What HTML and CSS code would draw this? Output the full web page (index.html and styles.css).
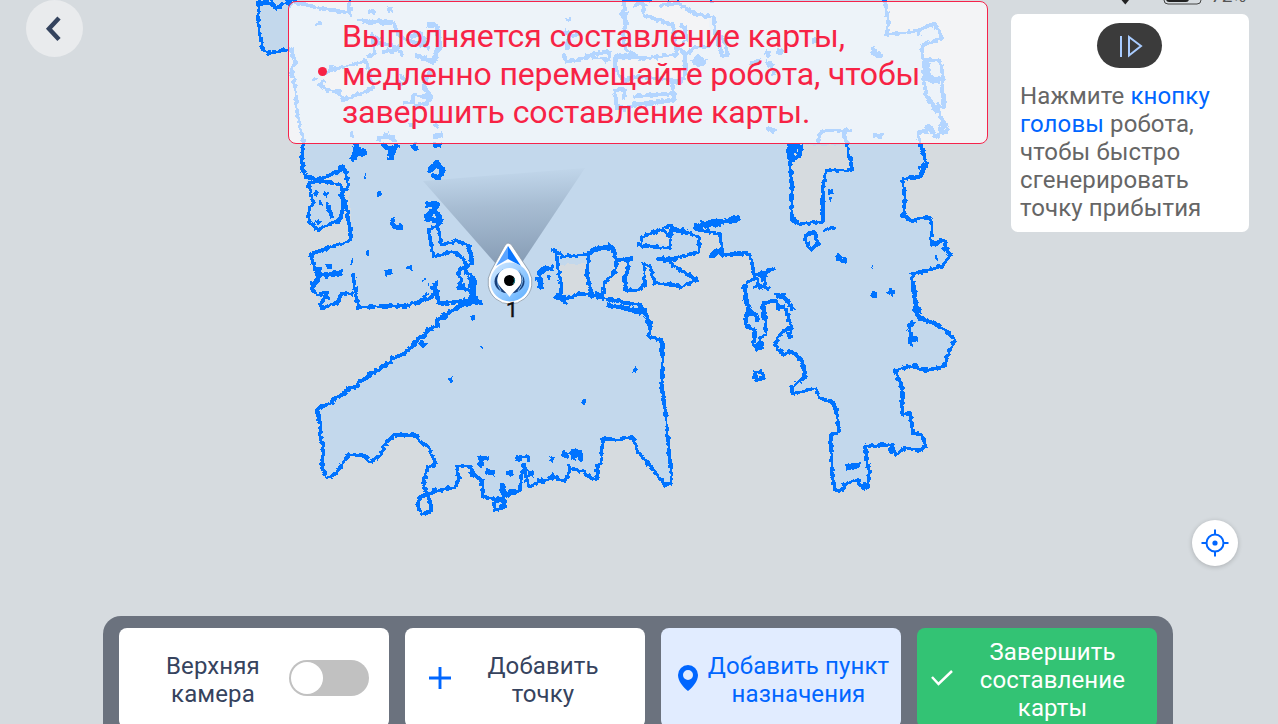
FILE: index.html
```html
<!DOCTYPE html>
<html lang="ru">
<head>
<meta charset="utf-8">
<title>Составление карты</title>
<link rel="stylesheet" href="styles.css">
</head>
<body>
<div class="screen">
  <svg class="map" viewBox="0 0 1278 724" width="1278" height="724">
    <defs>
      <filter id="rough" filterUnits="userSpaceOnUse" x="0" y="-20" width="1278" height="760" color-interpolation-filters="sRGB">
        <feTurbulence type="fractalNoise" baseFrequency="0.27" numOctaves="1" seed="4" result="n"/>
        <feDisplacementMap in="SourceGraphic" in2="n" scale="5.5" xChannelSelector="R" yChannelSelector="G"/>
      </filter>
      <linearGradient id="cone" x1="0.45" y1="0" x2="0.52" y2="1">
        <stop offset="0" stop-color="#8098b2" stop-opacity="0"/>
        <stop offset="0.4" stop-color="#7d93ac" stop-opacity="0.4"/>
        <stop offset="1" stop-color="#7288a2" stop-opacity="0.75"/>
      </linearGradient>
      <linearGradient id="ring" x1="0" y1="0" x2="1" y2="1">
        <stop offset="0" stop-color="#d5eaff"/>
        <stop offset="1" stop-color="#5caeff"/>
      </linearGradient>
    </defs>
    <g filter="url(#rough)" shape-rendering="crispEdges">
      <path class="floor" d="M260-10L258 12 259 30 263 50 269 53 289 48 294 60 292 85 297 110 304 143 303 160 306 178 314 206 308 218 317 230 338 223 345 208 351 237 347 241 312 254 315 272 318 282 312 288 316 296 323 307 340 300 354 293 358 309 385 308 420 301 436 290 437 302 470 302 447 313 436 325 420 338 406 351 380 368 358 383 333 400 318 408 317 412 322 437 323 447 322 467 327 478 337 473 350 455 365 456 370 462 382 455 393 435 415 435 428 447 436 463 428 468 423 483 427 494 447 488 455 488 459 478 458 467 470 467 475 477 482 480 483 497 497 500 495 510 504 507 502 498 520 490 528 487 555 477 563 482 570 468 583 472 593 480 598 477 602 457 603 438 617 440 633 437 637 450 665 485 672 483 670 457 667 423 662 383 663 357 662 340 649 337 650 323 645 312 638 305 597 297 590 293 602 294 605 281 617 260 626 257 625 287 633 292 645 285 645 263 655 283 670 283 682 287 697 280 673 263 660 260 700 252 698 237 702 228 720 233 722 252 712 257 748 252 753 273 755 277 746 283 744 297 751 313 746 315 746 327 755 330 753 345 757 349 762 347 760 338 767 333 763 303 775 300 778 308 785 308 792 328 782 332 775 345 783 355 792 352 802 360 806 377 792 388 793 394 815 388 820 398 832 402 837 410 839 432 831 435 832 467 835 490 844 490 846 483 857 480 863 489 868 487 869 472 865 447 892 444 895 455 905 448 920 450 926 447 922 435 913 433 910 413 903 415 902 387 895 370 913 366 925 370 943 367 950 350 955 340 943 328 933 323 920 318 915 310 915 290 911 273 943 265 950 255 943 240 933 245 932 218 912 221 903 215 905 200 903 179 920 177 927 163 918 142 918 132 927 132 933 137 948 130 940 115 945 100 940 60 923 60 922 45 942 38 935 23 918 30 887 35 888 23 884-10Z"/>
      <g class="hole">
        <path d="M300 3L349 13 350-9 300-9ZM322 75L366 62 372 86 373 90 343 100 337 92 325 88ZM560 265L588 263 592 293 560 295ZM642 237L670 227 672 247ZM648 6L676 4 710 16 711 43 687 50 683 75 617 82 617 60 675 57 673 25 648 17Z"/>
        <path d="M791 145L848 145 852 171 825 171 823 222 795 223 790 160ZM306 182L348 174 352 238 350 218 344 188Z"/>
      </g>
      <g class="wall">
        <g transform="translate(250 0) scale(.3333)">
          <path d="M30-9L22 45 30 100 38 145 52 160 115 148 122 145 135 185 125 210 135 260 140 325 150 380 162 430 155 480 160 520M22 15L55 5 80 25 100 10 125 15 112 0M65 0L75 20M110-5L150 10 210 25 295 38 300-10M302 20V50M195 72L212 68M325 58L365 68 430 65M350 170L375 160 365 100M215 222L245 210 348 182 370 265 280 300 265 275 235 270 205 255 225 240M235 205L250 200M190 240L200 235M460 310L490 310 490 285 540 290 530 310 490 320M545 290L520 260 540 215M450 225L470 245M445 240L460 255M550 370L565 380M475 375L495 375M305 395V410"/>
          <path class="thick" d="M370 65L430 68M355 33L375 37M412 28L430 30M400 155L430 150 450 140M365 110L390 120M380 415L420 410 435 425M410 395V412M550 410L578 405M320 430L322 455 345 455M322 450L305 480M400 435L425 445 420 480M440 435L425 455M490 435L497 450M550 435H570M530 75L560 75 570 130 550 185 495 165M480 110L510 100 530 145M265 505L285 502M540 505L560 490 575 505"/>
          <path d="M430 65L450 110 500 130 540 145M370 130L425 135 460 165"/>
        </g>
        <g transform="translate(500 0) scale(.3333)">
          <path d="M365 0H455M500 0H510M530 0H540M633 0V8M200 60L212 55M370 0L375 25 365 40 380 65 370 100 375 145 420 175 530 165 525 120 520 75 430 45 435 10M400 20L425 5 430 30M480 15L535 10 590 45 640 50 645 100 670 170 685 165 665 105M540 75L555 85 560 120 545 130M535 145L560 160 590 140 630 140M555 160V230L525 250M345 175V205L375 245 400 230 515 240 525 300 350 325 345 270 375 270 370 300M400 290L520 280M395 305L425 310 510 300M190 160L200 185 270 170 325 180 330 150M255 165L330 155M240 100L215 110"/>
          <path class="thick" d="M190 95L210 100 200 150M375 35V60M345 180L350 170 410 170M580 190L595 170 615 185 590 195M525 245L550 245M345 320L380 325"/>
        </g>
        <g transform="translate(750 0) scale(.3333)">
          <path d="M403-9L415 70 410 105 505 92 510 108M505 90L555 70 575 115 515 137 520 180 570 182 580 235 545 245 530 180M530 180L520 240 530 290 560 330M580 235L575 270 585 320 560 320M560 310L570 350 598 390 552 410 545 385 530 375 530 395 505 397 510 430 532 488 505 505M565 380L580 365M585 380L565 395M205 430L210 400 225 392 305 392M280 392L290 430 307 510M0 190L30 180"/>
          <path class="thick" d="M365 140L378 165 395 165M525 185V235L570 240M550 320L565 335M370 407H398M385 400V418M185 122H202M45 155L60 165M80 150L100 160M45 185L70 200M70 210V225M50 382L75 395M110 440H160M115 440L120 480M530 380L545 390"/>
        </g>
        <g transform="translate(290 140) scale(.3333)">
          <path d="M38 10L35 60 47 112 90 118 165 85 175 140 155 160 160 200 150 240 80 270 55 240 60 200 70 195 55 130 90 122 155 135 160 180 172 210 183 290 180 302 62 342 70 375 85 415 65 445 80 465 115 458 90 490 98 505 145 487 155 460 190 462M190 395L192 430 205 505 240 500 350 497 420 475 440 455 445 490 530 485 470 520 437 540M60 430L90 420M108 380L125 382M110 190L128 235M105 455L115 480"/>
          <path class="thick" d="M75 400L110 405 160 398M85 380L95 410M75 155L82 165M107 155L112 165M88 190H95M80 240L90 250M155 160L170 210M195 20L200 42 230 37M200 40L188 60M275 12L300 30 303 60M325 15L305 35M370 12L380 30M430 15H455M415 95L438 72 460 90 445 115 425 105M225 108H228M265 155L270 168M305 235L310 260 340 262M229 337H236M185 363L190 365M285 400L308 393M352 384L366 381M398 418L403 420M415 433H418M405 195L445 190 425 215 405 235 455 245 430 200M430 440L440 465 435 425M500 440L520 440M520 480L575 490M535 470L555 485"/>
          <path d="M415 265L430 350 490 335 520 355 530 380 505 390 515 435 545 460 545 485M445 240L445 270 455 315 500 302 540 320 548 370 525 380 525 395 555 415 550 480M420 265L445 260M400 475L410 460"/>
        </g>
        <g transform="translate(470 160) scale(.3333)">
          <path d="M245 270L258 275 275 390 270 415 290 430M250 268L280 290 355 285 350 340 365 400M350 285L380 268 430 262 440 300 435 335 405 365 400 410M440 300L490 295M470 290L475 330 462 355 468 390 500 392 525 375 522 310 540 320 555 370 600 372 635 382 680 358 610 318 600 305M255 405L285 415 325 402 365 402 420 420 510 435 525 455 540 505M420 435L465 445 515 450M500 255L600 265 605 195 515 232 515 255M580 210L605 240M600 210L640 215 685 230 688 275 600 300 560 297M670 205L750 222 757 280M690 190L810 175M720 290L740 270 755 285 840 280M235 345L240 360M820 375L835 430 825 480 835 505M0 260V300"/>
          <path class="thick" d="M355 280L380 265 430 260 435 290M205 345L225 325 250 325M205 350L215 390M270 410L285 420M375 400L395 410M600 205L660 218M675 200L745 190 805 175M725 280L735 290M560 295L600 300M0 350L10 400 15 425 40 430"/>
        </g>
        <g transform="translate(730 140) scale(.3333)">
          <path d="M180 60L185 140 185 240 205 252 280 245 278 150 287 92 370 92M222 285L255 278 265 310 242 330 225 300 228 285M280 272L315 262M568 10L590 70 570 110 518 118 525 180 520 225 545 243 580 233 605 237 605 315 640 300 660 345 640 375 580 395 545 400 555 480 570 520M0 343L50 337 62 350 75 415 45 430 45 480 62 520 80 525M75 408L140 382M100 405L105 440 120 450M80 415L90 450M70 440L105 440M135 465L160 465 195 510M180 530L160 500 145 500 135 480 100 492 100 540M210 20V45L180 65"/>
          <path class="thick" d="M182 15L183 55M190 15L195 40M320 345L335 360 350 362M300 150L303 163M298 182H302M520 220V235M602 310H618M640 320L650 330M615 352H622M425 375H430M425 460H442M430 455V475M475 452L492 462M85 405L115 402M175 490L190 505M190 240H200M0 240L30 233"/>
        </g>
        <g transform="translate(300 300) scale(.3333)">
          <path d="M530 0L440 40 440 48 410 62 415 75 375 95 380 110 360 110 340 130 345 135 318 150 318 160 275 175 275 185 240 200 240 210 208 220 208 232 175 245 175 257 135 272 135 282 100 297 100 308 58 322 50 335 62 375 60 405 70 440 65 500 80 535 110 520 130 485 150 463 195 467 210 487 245 465 250 440 280 405 345 405 365 428 385 440 407 490 383 505 370 550 382 583 440 565 465 565 477 535 470 500 510 498 525 530 545 540 550 590 590 600 582 610 585 630 612 620 605 595 660 570M382 583L360 595 353 620 365 645 395 632 385 583M515 45L522 60"/>
          <path class="thick" d="M360 125L375 140M448 242L455 240M452 232V238M543 143H546M540 470L545 500M540 475H570M560 515L585 520M620 518H635M605 555L610 575M395 573H410M510 510L520 525M590 598L605 600M655 475V470"/>
        </g>
        <g transform="translate(500 290) scale(.3333)">
          <path d="M15 655L8 610 60 600 65 545 75 545 85 590 165 560 190 575 205 560 208 525 210 535 250 545 280 570 295 560 290 530 305 520 305 480 310 445 350 450 400 440 410 480 435 510 495 585 515 580 515 540 508 500 500 400 485 280 488 200 485 150 447 140 452 100 435 65 415 45 290 20 240 10 190 30M320 45L420 65M240 480L245 515M60 500L85 500 85 515M220 480V510"/>
          <path class="thick" d="M45 505H65M70 520L75 545M85 552H100M18 550H40M0 590H15M155 555L165 565M150 507L160 510M185 490L205 495M210 485H245M230 485V500M400 238L410 243M246 330L257 335M165 15L195 35M280 10L300 20M360 50L435 70M440 80L445 95M110 572H125"/>
        </g>
        <g transform="translate(720 290) scale(.3333)">
          <path d="M75 10L93 68 110 75 112 95M90 68L78 72 80 110 105 120 100 165 110 178 125 170 120 145 140 130 130 40 165 30 175 55 195 55 215 115 185 125 165 165 190 195 215 185 245 210 258 260 228 280 215 295 220 312 260 300 285 295 300 325 335 335 350 360 357 425 333 435 335 530 345 600 372 600 378 580 412 570 430 598 445 590 447 545 435 470 515 463 525 495 555 475 600 480 618 470 605 435 580 430 570 370 548 375 545 290 525 240 580 228 615 240 670 232 690 180 705 150 670 115 640 100 600 85 585 60 585 0M102 250L125 245 130 265 108 270 102 250M165 15L190 20 215 50M565 100L570 130 575 170"/>
          <path class="thick" d="M570 95L580 105M575 145L595 150M205 125L213 145M215 50L222 60M380 532L420 527M395 525L405 535M370 580L378 590M410 568V575M430 580L440 590M350 355V370M250 245L258 260M575 228H590M430 470L440 475M515 470V490M205 185H215M110 160L120 170M455 15H470M510 5L522 10"/>
        </g>
      </g>
    </g>
    <path d="M423 181L585 168 521 264 496 264Z" fill="url(#cone)"/>
    <g class="robot">
      <path d="M508 243Q506 243 504 247L491 271A22 22 0 1 0 529 271L513 247Q511 243 508 243Z" fill="#fff" stroke="#8796a5" stroke-width=".8"/>
      <path d="M508 246L496 266 508 259Z" fill="#5ba4ff"/>
      <path d="M508 246L521 266 508 259Z" fill="#0875ff"/>
      <circle cx="510" cy="282" r="19.500" fill="url(#ring)"/>
      <ellipse cx="509.500" cy="281.500" rx="15" ry="12" fill="#173f7b"/>
      <path d="M503 269Q493 280 501 291M519 270Q527 280 518 291" fill="none" stroke="#80b9ed" stroke-width="1"/>
      <path d="M509.500 268C502 268 497.500 273 497.500 280 497.500 287 505 290 509.500 297 514 290 521.500 287 521.500 280 521.500 273 517 268 509.500 268Z" fill="#fff"/>
      <circle cx="509.500" cy="280.500" r="5.500" fill="#000"/>
      <path d="M514 278Q516 281 513 284" fill="none" stroke="#087c8c"/>
    </g>
    <text class="point-label" x="506" y="317">1</text>
  </svg>

  <div class="status">
    <svg width="10" height="6" viewBox="0 0 10 6"><path d="M1.500 1H9L5.300 5.500Z" fill="#222"/></svg>
    <svg class="battery" width="40" height="18" viewBox="0 0 40 18"><rect x="1" y="1" width="37" height="16" rx="4" fill="none" stroke="#444"/><rect x="3" y="3" width="23" height="12" rx="3" fill="#222"/></svg>
    <span>72%</span>
  </div>

  <header class="top">
    <button class="back" aria-label="Назад"><svg width="57" height="57" viewBox="0 0 57 57"><path d="M33 18L23 28.800 33 39.500" fill="none" stroke="#34435e" stroke-width="4.500"/></svg></button>
    <section class="alert">
      <span class="dot"></span>
      <p>Выполняется составление карты,<br>медленно перемещайте робота, чтобы<br>завершить составление карты.</p>
    </section>
    <aside class="hint">
      <span class="head-key"><svg width="65" height="45" viewBox="0 0 65 45"><path d="M24 13V34M32 14V32.500L44 23Z" fill="none" stroke="#a9ccff" stroke-width="2"/></svg></span>
      <p>Нажмите <b>кнопку<br>головы</b> робота,<br>чтобы быстро<br>сгенерировать<br>точку прибытия</p>
    </aside>
  </header>

  <div class="tools">
    <button class="locate" aria-label="Центрировать"><svg width="46" height="46" viewBox="0 0 46 46"><g fill="none" stroke="#06f" stroke-width="2"><circle cx="23" cy="23" r="8.500"/><path d="M23 9.500V15M23 31V36.500M9.500 23H15M31 23H36.500"/></g><circle cx="23" cy="23" r="2.600" fill="#06f"/></svg></button>
  </div>

  <footer class="bar">
    <div class="action camera"><span>Верхняя<br>камера</span><i class="switch"></i></div>
    <button class="action add"><svg width="24" height="24" viewBox="0 0 24 24"><path d="M12 1V23M1 12H23" stroke="#06f" stroke-width="2.900"/></svg><span>Добавить<br>точку</span></button>
    <button class="action dest"><svg width="20" height="26" viewBox="0 0 20 26"><path fill="#06f" fill-rule="evenodd" d="M10 0A10 10 0 0 0 0 10C0 16 5 22 10 26 15 22 20 16 20 10A10 10 0 0 0 10 0ZM10 5A5 5 0 1 1 10 15 5 5 0 0 1 10 5Z"/></svg><span>Добавить пункт<br>назначения</span></button>
    <button class="action finish"><svg width="22" height="16" viewBox="0 0 22 16"><path d="M1 7L7.500 14 21 1" fill="none" stroke="#fff" stroke-width="2.500"/></svg><span>Завершить<br>составление<br>карты</span></button>
  </footer>
</div>
</body>
</html>
```
FILE: styles.css
```css
* { box-sizing: border-box; }
body { margin: 0; overflow: hidden; font-family: Roboto, sans-serif; }
p { margin: 0; }
svg { display: block; flex: none; }
button { border: 0; padding: 0; font: inherit; }
.screen {
  position: relative;
  width: 1278px;
  height: 724px;
  overflow: hidden;
  display: flex;
  flex-direction: column;
  background: #d6dbdf;
}
.map { position: absolute; inset: 0; }
.floor { fill: #c3d8ec; }
.hole { fill: #d6dbdf; }
.wall { fill: none; stroke: #0073ff; stroke-width: 11; stroke-linejoin: bevel; }
.wall .thick { stroke-width: 16; }
.point-label { font-size: 21px; fill: #111; stroke: #111; stroke-width: .5px; }

.status {
  position: absolute;
  top: -13px;
  left: 1120px;
  display: flex;
  align-items: flex-end;
  height: 18px;
  color: #555;
  font-size: 19px;
  line-height: 18px;
}
.battery { margin: 0 8px 0 33px; }

.top { position: relative; display: flex; align-items: flex-start; padding-left: 26px; }
.back { width: 57px; height: 57px; border-radius: 50%; background: #e9ebed; }
.alert {
  display: flex;
  align-items: center;
  width: 700px;
  height: 143px;
  margin: 1px 23px 0 205px;
  padding: 2px 0 0 29px;
  border: 1px solid #f5234b;
  border-radius: 8px;
  background: rgba(255, 255, 255, .7);
  color: #f72345;
  font-size: 32px;
  line-height: 38px;
  letter-spacing: -.13px;
  white-space: nowrap;
}
.dot { width: 9px; height: 9px; margin: -4px 15px 0 0; border-radius: 50%; background: #f72345; }
.hint {
  display: flex;
  flex-direction: column;
  align-items: center;
  width: 238px;
  height: 218px;
  margin-top: 14px;
  padding: 9px 9px 0;
  border-radius: 7px;
  background: #fff;
  color: #666;
  font-size: 24px;
  line-height: 28px;
  letter-spacing: .12px;
}
.hint p { align-self: stretch; margin-top: 14px; white-space: nowrap; }
.hint b { color: #06f; font-weight: 400; }
.head-key { margin-right: 2px; border-radius: 23px; background: #3b3b3b; }

.tools { display: flex; flex: 1; align-items: flex-end; justify-content: flex-end; padding: 0 40px 50px 0; }
.locate { width: 46px; height: 46px; border-radius: 50%; background: #fff; box-shadow: 0 1px 5px rgba(0, 0, 0, .2); z-index: 1; }

.bar {
  position: relative;
  display: grid;
  grid-template-columns: 270px 240px 240px 240px;
  gap: 16px;
  width: 1070px;
  height: 108px;
  margin-left: 103px;
  padding: 12px 16px 0;
  border-radius: 18px 18px 0 0;
  background: #6b727e;
}
.action {
  display: flex;
  align-items: center;
  height: 100px;
  border-radius: 8px;
  background: #fff;
  color: #36435e;
  font-size: 24px;
  line-height: 28px;
  letter-spacing: .12px;
  text-align: center;
  white-space: nowrap;
  padding-top: 4px;
}
.camera { padding-left: 47px; }
.switch { width: 80px; height: 36px; margin: -4px 20px 0 auto; border-radius: 18px; background: #c1c1c1; }
.switch::before { content: ""; display: block; width: 32px; height: 32px; margin: 2px; border-radius: 50%; background: #fff; }
.action svg { margin-top: -4px; }
.add { padding-left: 23px; }
.add span { flex: 1; padding-right: 11px; }
.dest { padding-left: 17px; background: #e1ecff; color: #06f; }
.dest span { flex: 1; padding-right: 2px; }
.finish { padding-left: 14px; background: #33c374; color: #fff; }
.finish span { flex: 1; padding-right: 5px; }
```
